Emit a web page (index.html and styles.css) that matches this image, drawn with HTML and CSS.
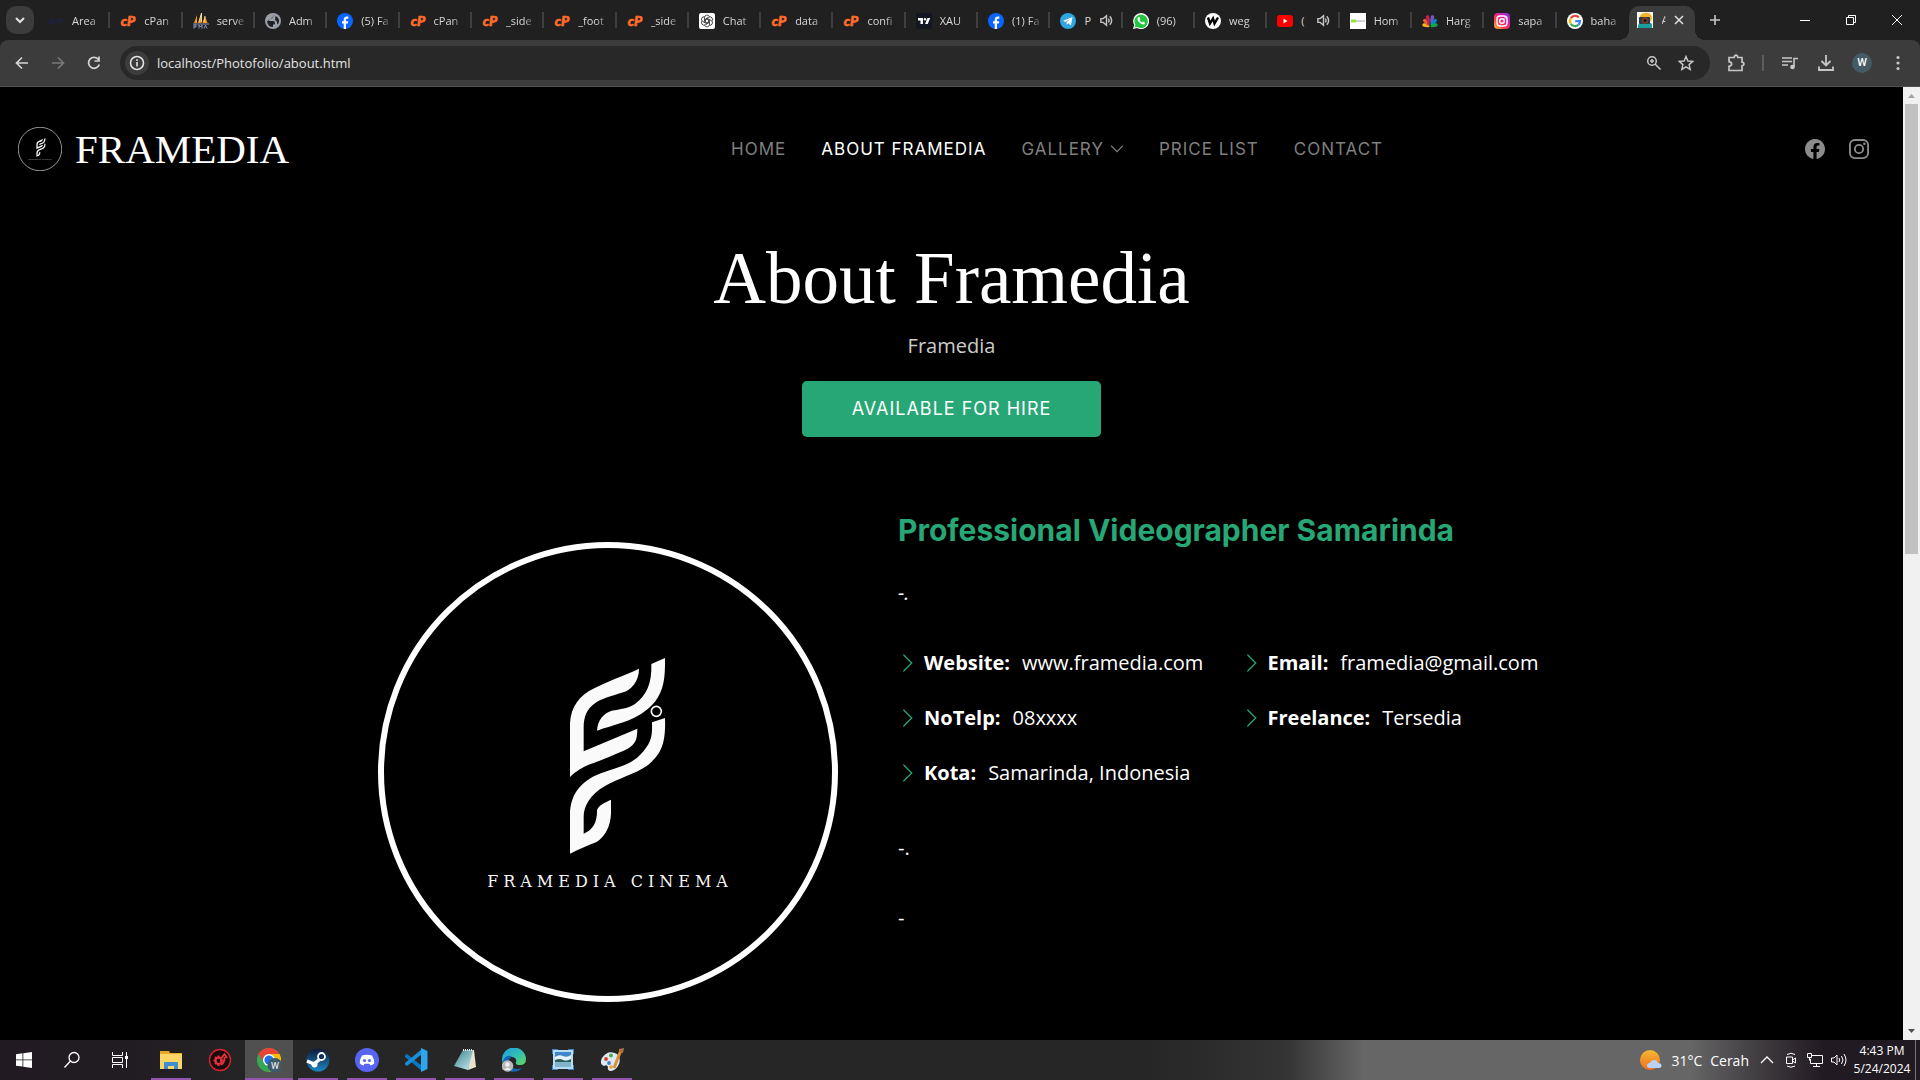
FILE: index.html
```html
<!DOCTYPE html>
<html lang="en">
<head>
<meta charset="utf-8">
<meta name="viewport" content="width=device-width, initial-scale=1">
<title>About - Framedia</title>
<link rel="stylesheet" href="styles.css">
</head>
<body>
<svg class="defs" aria-hidden="true">
  <defs>
    <linearGradient id="ig" x1="0" y1="1" x2="1" y2="0"><stop offset="0" stop-color="#ffc83a"/><stop offset=".35" stop-color="#fd3a4a"/><stop offset=".65" stop-color="#e01fa8"/><stop offset="1" stop-color="#7a2cf5"/></linearGradient>
    <linearGradient id="edge" x1="0" y1="0" x2="1" y2="1"><stop offset="0" stop-color="#1b9de2"/><stop offset=".55" stop-color="#35c1b0"/><stop offset="1" stop-color="#6ad84f"/></linearGradient>
    <linearGradient id="steam" x1="0" y1="0" x2="0" y2="1"><stop offset="0" stop-color="#10193a"/><stop offset="1" stop-color="#1a86c0"/></linearGradient>
    <linearGradient id="note" x1="0" y1="0" x2="1" y2="1"><stop offset="0" stop-color="#3b7f8a"/><stop offset="1" stop-color="#c9eef2"/></linearGradient>
    <linearGradient id="sun" x1="0" y1="0" x2="0" y2="1"><stop offset="0" stop-color="#f7b733"/><stop offset="1" stop-color="#f0701c"/></linearGradient>
    <linearGradient id="sky" x1="0" y1="0" x2="0" y2="1"><stop offset="0" stop-color="#4c93d8"/><stop offset=".5" stop-color="#d8eef8"/><stop offset=".6" stop-color="#2c5c50"/><stop offset="1" stop-color="#7fb4c0"/></linearGradient>
  </defs>
  <symbol id="cp" viewBox="0 0 16 16"><text x="8" y="13" text-anchor="middle" font-family="Lato, sans-serif" font-weight="900" font-style="italic" font-size="14" fill="#ff6c2c" stroke="#ff6c2c" stroke-width=".6">cP</text></symbol>
  <symbol id="fb" viewBox="0 0 16 16"><circle cx="8" cy="8" r="8" fill="#0866ff"/><path d="M6.700 16v-5.400H5V8.200h1.700V7c0-2.500 1.300-3.500 3.200-3.500l1.400.1v2.100h-1c-1 0-1.300.5-1.300 1.300v1.200h2.200l-.4 2.400H9V16z" fill="#fff"/></symbol>
  <symbol id="pma" viewBox="0 0 16 16"><path d="M1 10 4 2v8zM5 10 8.500 0v10zM9.500 10 12 3l2.500 7z" fill="#f89c0e"/><path d="M6 9 8.500 0v9M11 9l1-6" stroke="#e8d9b0" fill="none"/><path d="M0 11h16M1 15.500V12h2v2H1m5 1.500V12l1.500 2L9 12v3.500m2 0 1.500-3.500 1.500 3.500" stroke="#8a8fc0" fill="none"/></symbol>
  <symbol id="globe" viewBox="0 0 16 16"><circle cx="8" cy="8" r="8" fill="#9aa0a6"/><path d="M9.500 2.500Q8 2 8 4 7.500 5.500 5.500 5.500 4 6 4 8h4q2 0 2 2t-2 1.500V14Q3 14 2 8.500M10.500 3q3.500 1.500 3.500 5 0 2-1.500 3.500L11.500 8 10 7z" fill="#202124"/></symbol>
  <symbol id="gpt" viewBox="0 0 16 16"><rect width="16" height="16" rx="2" fill="#fff"/><g fill="none" stroke="#222" stroke-width=".8"><path id="petal" d="M5.500 5V4.500a2.600 2.600 0 0 1 5-.8M5.500 5v3.500L8 10"/><use href="#petal" transform="rotate(60 8 8)"/><use href="#petal" transform="rotate(120 8 8)"/><use href="#petal" transform="rotate(180 8 8)"/><use href="#petal" transform="rotate(240 8 8)"/><use href="#petal" transform="rotate(300 8 8)"/></g></symbol>
  <symbol id="tv" viewBox="0 0 16 16"><rect width="16" height="16" rx="2" fill="#131722"/><path d="M2 5h5v6H4.500V7.500H2zM11.500 5h2.700l-2.500 6H9z" fill="#fff"/><circle cx="9" cy="6.200" r="1.200" fill="#fff"/></symbol>
  <symbol id="tg" viewBox="0 0 16 16"><circle cx="8" cy="8" r="8" fill="#2ea6df"/><path d="m3 7.800 9.500-3.700L11 12.300 8.200 10.200 6.700 11.800 6.500 9.300 10.500 5.800 5.500 8.900z" fill="#fff"/></symbol>
  <symbol id="wa" viewBox="0 0 16 16"><path d="m0 16 1.200-4A8 8 0 1 1 4.200 15z" fill="#fff"/><path d="m1.500 14.600.9-2.800A6.700 6.700 0 1 1 4.600 14z" fill="#25c543"/><path d="M5.500 4c-2 1.500-.5 4 1 5.500s4 2.800 5.300 1.200V9.500L10 8.600l-.9 1C8 9 7 8 6.500 7l.7-.9L6.400 4z" fill="#fff"/></symbol>
  <symbol id="wego" viewBox="0 0 16 16"><circle cx="8" cy="8" r="8" fill="#fff"/><path d="m3 4.500 2 6 3-5 1.500 5L13 4.500" stroke="#000" stroke-width="2.400" fill="none"/></symbol>
  <symbol id="yt" viewBox="0 0 16 16"><rect y="2" width="16" height="12" rx="3" fill="#f00"/><path d="m6.500 5.500 4 2.500-4 2.500z" fill="#fff"/></symbol>
  <symbol id="home" viewBox="0 0 16 16"><path fill="#fff" d="M0 0h16v16H0z"/><path d="M1 8h5" stroke="#9be03c" stroke-width="3"/><path d="M6 8h9" stroke="#9aa"/></symbol>
  <symbol id="nbc" viewBox="0 0 16 16"><g stroke-width="3.400" stroke-linecap="round"><path d="M6 12.500 2 12" stroke="#f5b61b"/><path d="M6 11 2.700 7.500" stroke="#ef5b24"/><path d="M7 10 5.500 4" stroke="#c8204f"/><path d="m9 10 1.500-6" stroke="#6a5cc0"/><path d="m10 11 3.300-3.500" stroke="#0b82cc"/><path d="m10 12.500 4-.5" stroke="#12a650"/></g><path d="m8 3 .6 10h-1.200z" fill="#202020"/></symbol>
  <symbol id="insta" viewBox="0 0 16 16"><rect width="16" height="16" rx="4" fill="url(#ig)"/><g fill="none" stroke="#fff" stroke-width="1.400"><rect x="3" y="3" width="10" height="10" rx="3"/><circle cx="8" cy="8" r="2.300"/></g><circle cx="11" cy="5" r=".7" fill="#fff"/></symbol>
  <symbol id="goog" viewBox="0 0 16 16"><circle cx="8" cy="8" r="8" fill="#fff"/><g fill="none" stroke-width="2.200"><path d="M11.800 4.400A5 5 0 0 0 3.800 5.300" stroke="#ea4335"/><path d="M3.800 5.300a5 5 0 0 0 0 5.400" stroke="#fbbc05"/><path d="M3.800 10.700a5 5 0 0 0 7.500 1.200" stroke="#34a853"/><path d="M11.300 11.900A5 5 0 0 0 13 8.200H8.200" stroke="#4285f4"/></g></symbol>
  <symbol id="camera" viewBox="0 0 16 16"><path fill="#f5f5ee" d="M0 0h16v16H0z"/><path d="M3 4Q6 0 11 1q4 1 4 6l-2 3H3z" fill="#f0b429"/><path d="M1 16v-3l3-3h8l3 2v4z" fill="#1d9c9c"/><rect x="2" y="5" width="11" height="7" rx="1" fill="#29384a"/><circle cx="8" cy="8.500" r="3.200" fill="#7b3f1e"/><circle cx="8" cy="8.500" r="1.500" fill="#111"/></symbol>
  <symbol id="spk" viewBox="0 0 16 16"><path d="M2 6h2.500L8 3v10L4.500 10H2z" fill="none" stroke="#c7c7c7" stroke-width="1.500"/><path d="M10 6q1.500 2 0 4M11.500 3.500q4 4.500 0 9" fill="none" stroke="#c7c7c7" stroke-width="1.500"/></symbol>
  <symbol id="framedia" viewBox="0 0 460 460">
    <circle cx="230" cy="230" r="227" fill="#000" stroke="#fff" stroke-width="6"/>
    <g transform="translate(162 98) scale(.33333)" fill="#fafafa">
      <path d="M297 86C297 125 273 150 250 157C215 168 180 178 165 190C140 208 131 230 131 265V334L292 266C292 302 285 312 262 327C235 340 180 362 150 373C125 383 110 393 90 411V250C92 200 120 165 160 146C200 125 250 108 297 86Z"/>
      <path d="M375 54C376 110 372 150 345 185C320 215 290 232 250 247C220 257 195 264 171 272C173 240 190 220 215 212C240 208 265 205 285 192C320 165 336 130 334 72Z"/>
      <path d="M375 234C377 300 370 340 320 378C285 402 235 415 195 438C150 463 131 500 131 530V581C160 570 172 545 171 510C178 495 190 490 213 479V520C212 560 195 590 170 606C145 616 115 628 90 641V520C92 470 115 430 170 405C215 385 270 378 300 345C335 308 337 290 336 247Z"/>
      <circle cx="349" cy="214" r="15" fill="none" stroke="#fafafa" stroke-width="5"/>
    </g>
    <text x="232" y="345" text-anchor="middle" font-family="'DejaVu Serif', serif" font-size="16" letter-spacing="5" fill="#f5f5f5">FRAMEDIA CINEMA</text>
  </symbol>
  <symbol id="chev" viewBox="0 0 16 16"><path d="m4.600 1.600 6.400 6.400-6.400 6.400" fill="none" stroke="currentColor" stroke-linecap="round"/></symbol>
</svg>

<header class="browser">
  <div class="tabstrip">
    <button class="tab-search" aria-label="Search tabs"><svg width="12" height="12" viewBox="0 0 12 12"><path d="m2 4 4 4 4-4" fill="none" stroke="#e3e3e3" stroke-width="2"/></svg></button>
    <div class="tabs">
      <button class="tab"><svg class="fav" viewBox="0 0 16 16"><path d="M1 6h6v5H1zM9 6h6v4H9z" fill="#1b2238"/></svg><span class="t">Area</span></button>
      <button class="tab"><svg class="fav"><use href="#cp"/></svg><span class="t">cPan</span></button>
      <button class="tab"><svg class="fav"><use href="#pma"/></svg><span class="t">serve</span></button>
      <button class="tab"><svg class="fav"><use href="#globe"/></svg><span class="t">Adm</span></button>
      <button class="tab"><svg class="fav"><use href="#fb"/></svg><span class="t">(5) Fa</span></button>
      <button class="tab"><svg class="fav"><use href="#cp"/></svg><span class="t">cPan</span></button>
      <button class="tab"><svg class="fav"><use href="#cp"/></svg><span class="t">_side</span></button>
      <button class="tab"><svg class="fav"><use href="#cp"/></svg><span class="t">_foot</span></button>
      <button class="tab"><svg class="fav"><use href="#cp"/></svg><span class="t">_side</span></button>
      <button class="tab"><svg class="fav"><use href="#gpt"/></svg><span class="t">Chat</span></button>
      <button class="tab"><svg class="fav"><use href="#cp"/></svg><span class="t">data</span></button>
      <button class="tab"><svg class="fav"><use href="#cp"/></svg><span class="t">confi</span></button>
      <button class="tab"><svg class="fav"><use href="#tv"/></svg><span class="t">XAU</span></button>
      <button class="tab"><svg class="fav"><use href="#fb"/></svg><span class="t">(1) Fa</span></button>
      <button class="tab"><svg class="fav"><use href="#tg"/></svg><span class="t s">P</span><svg class="spk"><use href="#spk"/></svg></button>
      <button class="tab"><svg class="fav"><use href="#wa"/></svg><span class="t">(96)</span></button>
      <button class="tab"><svg class="fav"><use href="#wego"/></svg><span class="t">weg</span></button>
      <button class="tab"><svg class="fav"><use href="#yt"/></svg><span class="t s">(</span><svg class="spk"><use href="#spk"/></svg></button>
      <button class="tab"><svg class="fav"><use href="#home"/></svg><span class="t">Hom</span></button>
      <button class="tab"><svg class="fav"><use href="#nbc"/></svg><span class="t">Harg</span></button>
      <button class="tab"><svg class="fav"><use href="#insta"/></svg><span class="t">sapa</span></button>
      <button class="tab"><svg class="fav"><use href="#goog"/></svg><span class="t">baha</span></button>
    </div>
    <div class="tab-active"><svg class="fav"><use href="#camera"/></svg><span class="t cut">A</span><button class="close" aria-label="Close tab"><svg width="10" height="10" viewBox="0 0 10 10"><path d="m1 1 8 8M9 1 1 9" stroke="#e3e3e3" stroke-width="1.500"/></svg></button></div>
    <button class="newtab" aria-label="New tab"><svg width="12" height="12" viewBox="0 0 12 12"><path d="M6 1v10M1 6h10" stroke="#c7c7c7" stroke-width="1.600"/></svg></button>
    <div class="winctl">
      <button aria-label="Minimize"><svg width="12" height="12" viewBox="0 0 12 12"><path d="M1 6.500h10" stroke="#fff"/></svg></button>
      <button aria-label="Restore"><svg width="12" height="12" viewBox="0 0 12 12"><path d="M1.500 3.500h7v7h-7zM3.500 3V1.500h7v7H9" fill="none" stroke="#fff"/></svg></button>
      <button aria-label="Close"><svg width="12" height="12" viewBox="0 0 12 12"><path d="m1 1 10 10M11 1 1 11" stroke="#fff"/></svg></button>
    </div>
  </div>
  <div class="toolbar">
    <button class="tb" aria-label="Back"><svg viewBox="0 0 16 16"><path d="M14 8H3M8 2.500 2.500 8 8 13.500" fill="none" stroke="#d5d5d5" stroke-width="1.700"/></svg></button>
    <button class="tb" aria-label="Forward"><svg viewBox="0 0 16 16"><path d="M2 8h11M8 2.500 13.500 8 8 13.500" fill="none" stroke="#787878" stroke-width="1.700"/></svg></button>
    <button class="tb" aria-label="Reload"><svg viewBox="0 0 16 16"><path d="M12.500 4.500A5.500 5.500 0 1 0 13.300 9.500M13 1.500V6H8.500" fill="none" stroke="#d5d5d5" stroke-width="1.700"/></svg></button>
    <div class="omnibox">
      <button class="info" aria-label="Site information"><svg width="16" height="16" viewBox="0 0 16 16"><circle cx="8" cy="8" r="6.500" fill="none" stroke="#e3e3e3" stroke-width="1.600"/><path d="M8 7v4.500M8 4.300v1.700" stroke="#e3e3e3" stroke-width="1.600"/></svg></button>
      <input class="url" type="text" aria-label="Address" value="localhost/Photofolio/about.html">
      <button class="ob" aria-label="Zoom"><svg viewBox="0 0 16 16"><circle cx="6" cy="6" r="4.300" fill="none" stroke="#c7c7c7" stroke-width="1.500"/><path d="m9 9 5.500 5.500M6 4v4M4 6h4" stroke="#c7c7c7" stroke-width="1.500"/></svg></button>
      <button class="ob" aria-label="Bookmark"><svg viewBox="0 0 16 16"><path d="m8 1.500 1.900 4.500 4.900.4-3.700 3.200 1.100 4.800L8 11.800l-4.200 2.600 1.100-4.800L1.200 6.400 6.100 6z" fill="none" stroke="#c7c7c7" stroke-width="1.400"/></svg></button>
    </div>
    <button class="tb ext" aria-label="Extensions"><svg viewBox="0 0 18 18"><path d="M2 3.500h5.200q.3-2.300 1.800-2.300t1.800 2.300H15v4.700q2 .3 2 1.800t-2 1.800v4.700H2v-4.200q2.600-.5 2.600-2.300T2 7.700z" fill="none" stroke="#c7c7c7" stroke-width="1.700"/></svg></button>
    <span class="sep"></span>
    <button class="tb" aria-label="Media"><svg viewBox="0 0 16 16"><path d="M0 3h10M0 6.500h10M0 10h6M12 12V3.500h4" fill="none" stroke="#c7c7c7" stroke-width="1.600"/><circle cx="10.500" cy="12" r="2.300" fill="#c7c7c7"/></svg></button>
    <button class="tb" aria-label="Downloads"><svg viewBox="0 0 16 16"><path d="M8 0v10M3.500 6 8 10.500 12.500 6M1 11.500V15h14v-3.500" fill="none" stroke="#c7c7c7" stroke-width="1.800"/></svg></button>
    <button class="tb" aria-label="Profile"><span class="avatar">W</span></button>
    <button class="tb" aria-label="Menu"><svg viewBox="0 0 16 16"><g fill="#c7c7c7"><circle cx="8" cy="2.500" r="1.600"/><circle cx="8" cy="8" r="1.600"/><circle cx="8" cy="13.500" r="1.600"/></g></svg></button>
  </div>
</header>

<div class="viewport">
  <div class="page">
    <header class="site-header">
      <a class="brand" href="#"><svg class="brand-logo"><use href="#framedia"/></svg><span>FRAMEDIA</span></a>
      <nav class="nav">
        <a href="#">Home</a>
        <a href="#" class="on">About Framedia</a>
        <a href="#">Gallery <svg width="14" height="14" viewBox="0 0 16 16"><path d="m1.600 4.600 6.400 6.400 6.400-6.400" fill="none" stroke="currentColor" stroke-linecap="round" stroke-width="1.300"/></svg></a>
        <a href="#">Price List</a>
        <a href="#">Contact</a>
      </nav>
      <div class="social">
        <a href="#" aria-label="Facebook"><svg viewBox="0 0 16 16"><path fill="currentColor" d="M16 8.049c0-4.446-3.582-8.050-8-8.050C3.580 0-.002 3.603-.002 8.050c0 4.017 2.926 7.347 6.750 7.951v-5.625h-2.030V8.050H6.750V6.275c0-2.017 1.195-3.131 3.022-3.131.876 0 1.791.157 1.791.157v1.980h-1.009c-.993 0-1.303.621-1.303 1.258v1.510h2.218l-.354 2.326H9.250V16c3.824-.604 6.750-3.934 6.750-7.951z"/></svg></a>
        <a href="#" aria-label="Instagram"><svg viewBox="0 0 16 16"><g fill="none" stroke="currentColor" stroke-width="1.500"><rect x=".75" y=".75" width="14.500" height="14.500" rx="4"/><circle cx="8" cy="8" r="3.300"/></g><circle cx="12.300" cy="3.700" r="1" fill="currentColor"/></svg></a>
      </div>
    </header>
    <section class="hero">
      <h1>About Framedia</h1>
      <p>Framedia</p>
      <a class="cta" href="#">Available for hire</a>
    </section>
    <section class="about">
      <svg class="portrait" viewBox="-30 -30 520 520" role="img" aria-label="Framedia Cinema"><use href="#framedia" width="460" height="460"/></svg>
      <div class="bio">
        <h2>Professional Videographer Samarinda</h2>
        <p class="lead">-.</p>
        <div class="facts">
          <ul>
            <li><svg><use href="#chev"/></svg><strong>Website:</strong><span>www.framedia.com</span></li>
            <li><svg><use href="#chev"/></svg><strong>NoTelp:</strong><span>08xxxx</span></li>
            <li><svg><use href="#chev"/></svg><strong>Kota:</strong><span>Samarinda, Indonesia</span></li>
          </ul>
          <ul>
            <li><svg><use href="#chev"/></svg><strong>Email:</strong><span>framedia@gmail.com</span></li>
            <li><svg><use href="#chev"/></svg><strong>Freelance:</strong><span>Tersedia</span></li>
          </ul>
        </div>
        <p class="para">-.</p>
        <p class="para">-</p>
      </div>
    </section>
  </div>
  <div class="scrollbar" aria-hidden="true">
    <svg width="17" height="17" viewBox="0 0 17 17"><path d="m5 11 3.500-4L12 11z" fill="#a3a3a3"/></svg>
    <div class="track"><div class="thumb"></div></div>
    <svg width="17" height="17" viewBox="0 0 17 17"><path d="m5 6 3.500 4L12 6z" fill="#505050"/></svg>
  </div>
</div>

<footer class="taskbar">
  <button class="sys" aria-label="Start"><svg width="16" height="16" viewBox="0 0 16 16"><path d="M0 2.200 6.500 1.300v6.200H0zM7.300 1.200 16 0v7.500H7.300zM0 8.300h6.500v6.300L0 13.700zM7.300 8.300H16V16l-8.700-1.200z" fill="#fff"/></svg></button>
  <button class="sys" aria-label="Search"><svg width="18" height="18" viewBox="0 0 18 18"><circle cx="11" cy="6.500" r="5" fill="none" stroke="#fff" stroke-width="1.300"/><path d="M7.500 10 1.500 16.500" stroke="#fff" stroke-width="1.300"/></svg></button>
  <button class="sys" aria-label="Task view"><svg width="18" height="18" viewBox="0 0 18 18"><path d="M1.500 1v3.500h10V1M1.500 17v-3.500h10V17M1.500 6.500h10v5h-10zM15.500 1v16" fill="none" stroke="#fff"/><path d="M14 5h3v3h-3z" fill="#fff"/></svg></button>
  <div class="apps">
    <button class="app run" aria-label="File Explorer"><svg viewBox="0 0 24 24"><path d="M1 3h9l1 2h12v16H1z" fill="#e8a825"/><path d="M1 6h22v15H1z" fill="#fbd667"/><path d="M5 21v-7h14v7h-4v-3H9v3z" fill="#3f8fd0"/></svg></button>
    <button class="app" aria-label="Game booster"><svg viewBox="0 0 24 24"><circle cx="12" cy="12" r="10.500" fill="#1a0a0c" stroke="#d9262e" stroke-width="1.300"/><path d="M10.500 7.500v3M10.500 15v3M5.500 12.500h3M12 12.500h3M7 9l2 2M7 16l2-2" stroke="#e5323a" stroke-width="2"/><circle cx="10.500" cy="12.700" r="3.200" fill="none" stroke="#e5323a" stroke-width="2"/><path d="M13 17q4-3 3.500-8M13.500 10l3-4 2.500 4" fill="none" stroke="#e5323a" stroke-width="1.800"/></svg></button>
    <button class="app run cur" aria-label="Chrome"><svg viewBox="0 0 24 24"><circle cx="12" cy="12" r="12" fill="#34a853"/><path d="M1.600 6A12 12 0 0 1 22.400 6H12a6 6 0 0 0-5.200 9z" fill="#ea4335"/><path d="M22.400 6A12 12 0 0 1 12 24l5.200-9A6 6 0 0 0 12 6z" fill="#fbbc04"/><circle cx="12" cy="12" r="6" fill="#fff"/><circle cx="12" cy="12" r="4.600" fill="#1a73e8"/><circle cx="18" cy="17.500" r="7.500" fill="#3c5a68"/><text x="18" y="21" text-anchor="middle" font-family="Roboto, sans-serif" font-size="9" fill="#fff">W</text></svg></button>
    <button class="app run" aria-label="Steam"><svg viewBox="0 0 24 24"><circle cx="12" cy="12" r="11.500" fill="url(#steam)"/><path d="m1 13 7 3 6-5" stroke="#fff" stroke-width="3.500" fill="none"/><circle cx="8.500" cy="16.500" r="3" fill="#fff"/><circle cx="15.500" cy="8.500" r="3.500" fill="#14305a" stroke="#fff" stroke-width="1.800"/></svg></button>
    <button class="app run" aria-label="Discord"><svg viewBox="0 0 24 24"><circle cx="12" cy="12" r="12" fill="#5865f2"/><path d="M7 7.500q5-1.600 10 0 2.500 4 2.200 8-1.700 1.500-3.700 2l-1-1.800h-5l-1 1.800q-2-.5-3.700-2Q4.500 11.500 7 7.500z" fill="#fff"/><circle cx="9.500" cy="12.500" r="1.600" fill="#5865f2"/><circle cx="14.500" cy="12.500" r="1.600" fill="#5865f2"/></svg></button>
    <button class="app run" aria-label="Visual Studio Code"><svg viewBox="0 0 24 24"><path d="m1 7.500 2-1.500 15 12v5L1 9z" fill="#0b77c2"/><path d="m1 16.500 2 1.500L18 6V1L1 15z" fill="#1a8fd8"/><path d="m17 0 6.500 3v18L17 24z" fill="#2da6ee"/></svg></button>
    <button class="app run" aria-label="Notepad"><svg viewBox="0 0 24 24"><path d="M18 2h3l2 17-8 3z" fill="#e8e2cf"/><path d="M10 2h10l-5 20-14-4z" fill="url(#note)"/><path d="M10 2h10" stroke="#dfe8ea" stroke-width="2" stroke-dasharray="1 1"/></svg></button>
    <button class="app run" aria-label="Edge"><svg viewBox="0 0 24 24"><path d="M0 12A12 12 0 0 1 24 11q0 6-6 6-5 0-4-3 1-2-1-4-3-2-6 0Q3 13 5 18 0 16 0 12z" fill="url(#edge)"/><path d="M1 13Q3 7 10 8q-5 3-2 9 4 6 12 3-5 5-11 3.500Q1 21 1 13z" fill="#1565b8"/><circle cx="5.500" cy="18" r="5.800" fill="#b9b9b9"/><circle cx="5.500" cy="16.500" r="2.200" fill="#efefef"/><path d="M2 22q3.500-4.500 7 0z" fill="#efefef"/></svg></button>
    <button class="app run" aria-label="Photo viewer"><svg viewBox="0 0 24 24"><path fill="#3a88c8" d="M1 1h6v5H1zM17 1h6v5h-6zM1 17h6v5H1zM17 17h6v5h-6z"/><path fill="#b9dcf2" d="M2 2h20v19H2z"/><path fill="#3f86c9" d="M4 4h16v7H4z"/><path fill="#e4f1f8" d="M4 9q4-3 8-1t8-1v5H4z"/><path fill="#2f5f55" d="M4 12q5-2 8 0t8-1v4H4z"/><path fill="#7fb4cc" d="M4 14h16v5H4z"/></svg></button>
    <button class="app run" aria-label="Paint"><svg viewBox="0 0 24 24"><path d="M2 10Q8 1 17 6q5 5 1 12-3 5-8 5-3-1-2-4-1-3-4-1-5-2-2-8z" fill="#dfe9f1"/><circle cx="6" cy="11" r="1.900" fill="#d33b2c"/><circle cx="11" cy="7.500" r="1.900" fill="#4ba84d"/><circle cx="9" cy="15" r="1.900" fill="#3b7fd0"/><circle cx="11" cy="19" r="1.700" fill="#e8a020"/><path d="M21 2 14 20" stroke="#d8903a" stroke-width="3"/><path d="m19 1 5-1-1 5-4-1z" fill="#b07440"/></svg></button>
  </div>
  <div class="tray">
    <button class="weather"><svg width="24" height="24" viewBox="0 0 24 24"><circle cx="11" cy="12" r="10" fill="url(#sun)"/><path d="M11 20q-3 0-3-2.500T11 15q1-3 4-3t4 3q3.500 0 3.500 2.500T20 20z" fill="#b9d2f7"/></svg><span>31°C</span><span>Cerah</span></button>
    <button class="ti" aria-label="Hidden icons"><svg viewBox="0 0 16 16"><path d="m2 11 6-6 6 6" fill="none" stroke="#fff" stroke-width="1.300"/></svg></button>
    <button class="ti" aria-label="Meet now"><svg viewBox="0 0 16 16"><path d="M3.500 5h6v6.500h-6zM9.500 8l3-2v5l-3-2M4 2.500q4-2.500 8 0M4 14q4 2.500 8 0" fill="none" stroke="#fff"/></svg></button>
    <button class="ti" aria-label="Network"><svg viewBox="0 0 16 16"><path d="M5 3.500h10.500v8H3.500V7M9.500 11.500v3M6 14.500h7M.5 1.500h4v4h-4zM2.500 5.500v3" fill="none" stroke="#fff"/></svg></button>
    <button class="ti" aria-label="Volume"><svg viewBox="0 0 16 16"><path d="M.5 6H3l3-3v10l-3-3H.5zM8 6q1.500 2 0 4M10.500 4q3 4 0 8M13 2q4 6 0 12" fill="none" stroke="#fff"/></svg></button>
    <button class="clock"><span>4:43 PM</span><span>5/24/2024</span></button>
  </div>
</footer>
</body>
</html>
```
FILE: styles.css
```css
* { box-sizing: border-box; }
body { margin: 0; height: 100vh; display: flex; flex-direction: column; overflow: hidden; background: #000; color: #fff; font-family: "Open Sans", "Noto Sans", sans-serif; }
button { margin: 0; padding: 0; border: 0; background: none; color: inherit; font: inherit; display: flex; align-items: center; justify-content: center; }
a { color: inherit; text-decoration: none; }
.defs { position: absolute; width: 0; height: 0; }

/* Browser window */
.browser { flex: none; background: #202020; }
.tabstrip { display: flex; height: 40px; align-items: stretch; }
.tab-search { flex: none; width: 28px; height: 28px; margin: 6px 4px 6px 6px; border-radius: 10px; background: #3c3c3c; }
.tabs { flex: 0 1 1591px; min-width: 0; display: flex; }
.tab { flex: 1 1 0; min-width: 0; justify-content: flex-start; gap: 8px; padding: 1px 8px 0 10px; background: linear-gradient(#3f3f3f, #3f3f3f) right 12px / 2px 16px no-repeat; }
.tab:last-child { background: none; }
.fav { flex: none; width: 16px; height: 16px; }
.t { flex: 1; min-width: 0; overflow: hidden; white-space: nowrap; text-align: left; font-size: 11px; line-height: 16px; color: #d8d8d8; -webkit-mask-image: linear-gradient(90deg, #000 60%, transparent); mask-image: linear-gradient(90deg, #000 60%, transparent); }
.t.s { flex: 0 0 7px; -webkit-mask-image: none; mask-image: none; }
.t.cut { flex: 0 0 4px; }
.spk { flex: none; width: 15px; height: 15px; }
.tab-active { flex: none; display: flex; align-items: center; justify-content: space-between; width: 66px; margin-top: 6px; padding: 0 11px 6px 8px; border-radius: 10px 10px 0 0; background: #3c3c3c; position: relative; }
.tab-active::before, .tab-active::after { content: ""; position: absolute; bottom: 0; width: 10px; height: 10px; }
.tab-active::before { right: 100%; background: radial-gradient(circle at 0 0, transparent 10px, #3c3c3c 10px); }
.tab-active::after { left: 100%; background: radial-gradient(circle at 100% 0, transparent 10px, #3c3c3c 10px); }
.newtab { flex: none; width: 40px; }
.winctl { flex: none; display: flex; margin-left: auto; }
.winctl button { width: 46px; }
.toolbar { display: flex; align-items: center; height: 47px; padding: 0 4px; background: #3c3c3c; border-bottom: 1px solid #505050; border-radius: 8px 8px 0 0; }
.tb { flex: none; width: 36px; height: 36px; }
.tb svg { width: 16px; height: 16px; }
.tb.ext { width: 38px; margin-left: 7px; }
.tb.ext svg { width: 18px; height: 18px; }
.sep { flex: none; width: 2px; height: 16px; margin: 0 8px 0 7px; background: #5c5c5c; }
.avatar { width: 20px; height: 20px; border-radius: 50%; background: #455a64; color: #fff; font: 500 11px/20px Roboto, sans-serif; text-align: center; }
.omnibox { flex: 1; min-width: 0; display: flex; align-items: center; height: 34px; margin-left: 8px; padding: 0 8px 0 5px; border-radius: 17px; background: #282828; }
.info { flex: none; width: 24px; height: 24px; border-radius: 50%; background: #3c3c3c; }
.url { flex: 1; min-width: 0; padding: 0 8px; border: 0; outline: 0; background: none; color: #e3e3e3; font: 13px/20px "Open Sans", sans-serif; }
.ob { flex: none; width: 32px; height: 32px; }
.ob svg { width: 16px; height: 16px; }

/* Page area */
.viewport { flex: 1; min-height: 0; display: flex; }
.page { flex: 1; min-width: 0; overflow: hidden; }
.scrollbar { flex: none; width: 17px; display: flex; flex-direction: column; background: #f1f1f1; }
.track { flex: 1; padding: 0 2px; }
.thumb { height: 49%; background: #c1c1c1; }
.scrollbar svg { display: block; }

.site-header { display: flex; align-items: center; justify-content: space-between; height: 124px; padding: 0 34px 0 18px; }
.brand { display: flex; align-items: center; gap: 13px; font: 41px/46px "Liberation Serif", serif; }
.brand-logo { width: 44px; height: 44px; }
.nav { display: flex; gap: 35px; margin-left: 20px; font: 400 17px/24px Inter, sans-serif; letter-spacing: 1px; text-transform: uppercase; color: #7f7f7f; }
.nav a { display: flex; align-items: center; gap: 6px; }
.nav .on { color: #fff; }
.social { display: flex; gap: 24px; color: #8c8c8c; }
.social svg { display: block; width: 20px; height: 20px; }

.hero { display: flex; flex-direction: column; align-items: center; padding: 24px 20px 75px; }
h1 { margin: 0; font: 400 73px/88px "Liberation Serif", serif; }
.hero p { margin: 8px 0 20px; font-size: 20px; line-height: 30px; color: #ccc; }
.cta { padding: 16px 50px; border-radius: 5px; background: #27a776; font: 400 18px/24px Inter, sans-serif; letter-spacing: 1px; text-transform: uppercase; }

.about { display: grid; grid-template-columns: minmax(0, 520px) minmax(0, 657px); justify-content: center; align-items: start; gap: 30px; }
.portrait { display: block; width: 100%; }
.bio { font-size: 20px; line-height: 30px; }
h2 { margin: 0; font: 700 30px/36px Inter, sans-serif; color: #27a776; }
.bio p { margin: 0; }
.bio .lead { font-style: italic; padding: 30px 0 40px; }
.facts { display: grid; grid-template-columns: 1fr 1fr; gap: 30px; padding-bottom: 45px; }
.facts ul { margin: 0; padding: 0; list-style: none; display: flex; flex-direction: column; gap: 25px; }
.facts li { display: flex; align-items: center; white-space: nowrap; }
.facts svg { width: 20px; height: 20px; margin-right: 6px; color: #27a776; }
.facts strong { margin-right: 12px; }
.bio .para { padding-bottom: 40px; }

/* Taskbar */
.taskbar { flex: none; display: flex; height: 40px; background: linear-gradient(90deg, #211a22 0, #211c22 7%, #262626 14%, #262626 60%, #343434 67%, #666 71%, #666 88%, #3c383c 92%, #211a22 95%); }
.sys { flex: none; width: 48px; }
.apps { display: flex; gap: 1px; padding-left: 3px; }
.app { width: 48px; background: linear-gradient(#9355b0, #9355b0) center bottom / 40px 2px no-repeat; }
.app:not(.run) { background: none; }
.app.cur { background: linear-gradient(#9355b0, #9355b0) center bottom / 48px 2px no-repeat, #505050; }
.app svg { width: 24px; height: 24px; }
.tray { display: flex; margin-left: auto; padding-right: 2px; margin-right: 4px; border-right: 1px solid #777; }
.weather { gap: 8px; margin-right: 6px; font-size: 14px; }
.ti { width: 24px; }
.ti svg { width: 16px; height: 16px; }
.clock { flex-direction: column; width: 62px; font-size: 12px; line-height: 18px; }
```
